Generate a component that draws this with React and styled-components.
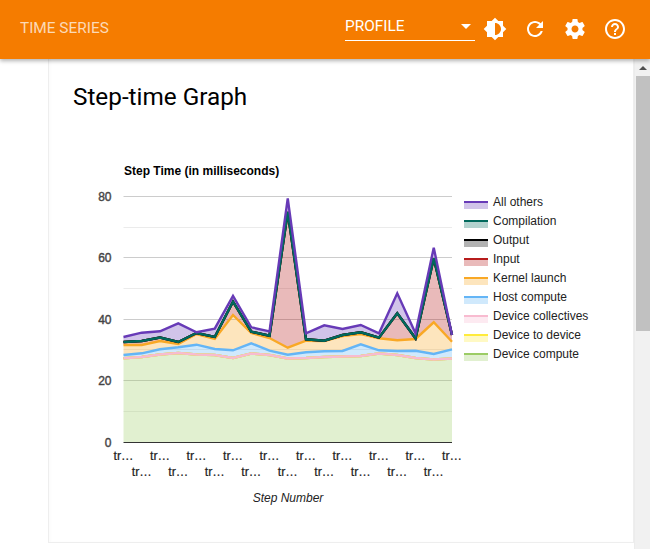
import React from 'react';
import styled, { createGlobalStyle } from 'styled-components';

const GlobalStyle = createGlobalStyle`
  html, body {
    margin: 0;
    height: 100%;
    overflow: hidden;
    background: #fff;
    font-family: Roboto, "Helvetica Neue", sans-serif;
  }
  #root { height: 100%; }
`;

const Page = styled.div`
  display: flex;
  flex-direction: column;
  height: 549px;
`;

const Header = styled.header`
  display: flex;
  align-items: center;
  flex: 0 0 59px;
  box-sizing: border-box;
  height: 59px;
  padding: 0 15px 2px 20px;
  background: #f57c00;
  color: #fff;
  box-shadow: 0 2px 4px rgba(0, 0, 0, 0.3);
  position: relative;
  z-index: 2;
`;

const AppTitle = styled.div`
  flex: 1;
  margin-bottom: 2px;
  font-size: 15.4px;
  color: rgba(255, 255, 255, 0.72);
`;

const RunSelect = styled.div`
  display: flex;
  align-items: center;
  justify-content: space-between;
  box-sizing: border-box;
  width: 130px;
  height: 25px;
  padding: 0 4px 4px 0;
  border-bottom: 1px solid #fff;
  font-size: 15.4px;
`;

const Caret = styled.span`
  width: 0;
  height: 0;
  border-left: 5px solid transparent;
  border-right: 5px solid transparent;
  border-top: 5px solid #fff;
`;

const IconButton = styled.button`
  display: flex;
  align-items: center;
  justify-content: center;
  width: 40px;
  height: 40px;
  padding: 0;
  border: 0;
  background: none;
  color: #fff;
`;

const Body = styled.div`
  display: flex;
  flex: 1;
  min-height: 0;
`;

const Main = styled.main`
  flex: 1;
  min-width: 0;
  padding: 0 0 6px 48px;
`;

const Card = styled.section`
  box-sizing: border-box;
  height: 100%;
  padding: 23px 0 0 24px;
  border: solid #eee;
  border-width: 0 1px 1px 1px;
  box-shadow: inset 2px 0 2px rgba(0, 0, 0, 0.015);
`;

const Heading = styled.h1`
  margin: 0;
  font-size: 24.3px;
  font-weight: 400;
  line-height: 30px;
  color: #000;
`;

const ChartTitle = styled.div`
  margin: 52px 0 0 51px;
  font-family: "Liberation Sans", Arial, sans-serif;
  font-size: 12px;
  font-weight: 700;
  line-height: 14px;
  color: #000;
`;

const ChartRow = styled.div`
  display: flex;
  align-items: flex-start;
`;

const Legend = styled.ul`
  display: flex;
  flex-direction: column;
  gap: 5px;
  margin: 17px 0 0;
  padding: 0;
  list-style: none;
`;

const LegendRow = styled.li`
  display: flex;
  align-items: center;
  gap: 5px;
  height: 14px;
  font-family: "Liberation Sans", Arial, sans-serif;
  font-size: 12px;
  color: #222;
`;

const Swatch = styled.span`
  box-sizing: border-box;
  width: 24px;
  height: 8px;
  margin-top: 6px;
  border-top: 2px solid ${({ $color }) => $color};
  background: ${({ $color }) => `${$color}4d`};
`;

const Scrollbar = styled.div`
  display: flex;
  flex-direction: column;
  flex: 0 0 16px;
  background: #f1f1f1;
  margin-top: 0;
  border-left: 1px solid #ececec;
  box-sizing: border-box;
`;

const ScrollArrow = styled.div`
  display: flex;
  justify-content: center;
  align-items: center;
  height: 17px;

  &::before {
    content: '';
    border-left: 4px solid transparent;
    border-right: 4px solid transparent;
    border-bottom: 4px solid #505050;
  }
`;

const ScrollThumb = styled.div`
  height: 255px;
  background: #c1c1c1;
  margin-left: 1px;
`;

const ICONS = [
  { name: 'theme', d: 'M20 15.31L23.31 12 20 8.69V4h-4.69L12 .69 8.69 4H4v4.69L.69 12 4 15.31V20h4.69L12 23.31 15.31 20H20v-4.69zM12 18V6c3.31 0 6 2.69 6 6s-2.69 6-6 6z' },
  { name: 'refresh', d: 'M17.65 6.35C16.2 4.9 14.21 4 12 4c-4.42 0-7.99 3.58-7.99 8s3.57 8 7.99 8c3.73 0 6.84-2.55 7.73-6h-2.08c-.82 2.33-3.04 4-5.65 4-3.31 0-6-2.69-6-6s2.69-6 6-6c1.66 0 3.14.69 4.22 1.78L13 11h7V4l-2.35 2.35z' },
  { name: 'settings', d: 'M19.43 12.98c.04-.32.07-.64.07-.98s-.03-.66-.07-.98l2.11-1.65c.19-.15.24-.42.12-.64l-2-3.46c-.12-.22-.39-.3-.61-.22l-2.49 1c-.52-.4-1.08-.73-1.69-.98l-.38-2.65C14.46 2.18 14.25 2 14 2h-4c-.25 0-.46.18-.49.42l-.38 2.65c-.61.25-1.17.59-1.69.98l-2.49-1c-.23-.09-.49 0-.61.22l-2 3.46c-.13.22-.07.49.12.64l2.11 1.65c-.04.32-.07.65-.07.98s.03.66.07.98l-2.11 1.65c-.19.15-.24.42-.12.64l2 3.46c.12.22.39.3.61.22l2.49-1c.52.4 1.08.73 1.69.98l.38 2.65c.03.24.24.42.49.42h4c.25 0 .46-.18.49-.42l.38-2.65c.61-.25 1.17-.59 1.69-.98l2.49 1c.23.09.49 0 .61-.22l2-3.46c.12-.22.07-.49-.12-.64l-2.11-1.65zM12 15.5c-1.93 0-3.5-1.57-3.5-3.5s1.57-3.5 3.5-3.5 3.5 1.57 3.5 3.5-1.57 3.5-3.5 3.5z' },
  { name: 'help', d: 'M11 18h2v-2h-2v2zm1-16C6.48 2 2 6.48 2 12s4.48 10 10 10 10-4.48 10-10S17.52 2 12 2zm0 18c-4.41 0-8-3.59-8-8s3.59-8 8-8 8 3.59 8 8-3.59 8-8 8zm0-14c-2.21 0-4 1.79-4 4h2c0-1.1.9-2 2-2s2 .9 2 2c0 2-3 1.75-3 5h2c0-2.25 3-2.5 3-5 0-2.21-1.79-4-4-4z' },
];

// chart coords are page pixels minus this origin
const ORIGIN_X = 73;
const ORIGIN_Y = 178;
const PLOT_LEFT = 123.5;
const PLOT_STEP = 18.25;
const BASE_Y = 442;

const xAt = (i) => PLOT_LEFT + PLOT_STEP * i - ORIGIN_X;

// y pixel of each stacked line, read off the reference, top series first
const COMPILATION = [342, 341, 337.5, 342, 333, 337, 301.7, 331.7, 335.7, 212, 339.3, 340.7, 335, 332.3, 337.7, 313.3, 338.3, 258.3, 335];
const COLLECTIVES = [358.3, 357, 354.5, 353, 354.5, 355, 358, 353.5, 355, 358.5, 358, 357, 356.5, 356, 353.5, 355, 358, 359.5, 358.5];

const SERIES = [
  { name: 'All others', color: '#673ab7', ys: [337, 332.7, 331.3, 323.3, 332.3, 328.7, 296, 327.3, 331.3, 198.3, 333.3, 325.3, 329, 325, 333.3, 293.3, 333.3, 247.7, 335] },
  { name: 'Compilation', color: '#00695c', ys: COMPILATION },
  { name: 'Output', color: '#000000', ys: COMPILATION },
  { name: 'Input', color: '#b71c1c', ys: COMPILATION },
  { name: 'Kernel launch', color: '#f9a825', ys: [345, 345, 341, 344, 334, 339, 315, 333, 338, 347.7, 340.7, 341, 336, 334, 338.3, 340.3, 339, 322.3, 341.7] },
  { name: 'Host compute', color: '#64b5f6', ys: [355, 353.3, 349.3, 347.3, 344.7, 349, 350.3, 343.3, 350.7, 354.7, 352.3, 351.3, 351, 344.3, 350.3, 351, 350.7, 354, 349.3] },
  { name: 'Device collectives', color: '#f8bbd0', ys: COLLECTIVES },
  { name: 'Device to device', color: '#ffeb3b', ys: COLLECTIVES },
  { name: 'Device compute', color: '#9ccc65', ys: COLLECTIVES },
];

const linePoints = (ys) => ys.map((y, i) => `${xAt(i)},${y - ORIGIN_Y}`).join(' ');

const areaPoints = (ys, below) => {
  const bottom = below
    ? [...below].reverse().map((y, i) => `${xAt(below.length - 1 - i)},${y - ORIGIN_Y}`)
    : [`${xAt(ys.length - 1)},${BASE_Y - ORIGIN_Y}`, `${xAt(0)},${BASE_Y - ORIGIN_Y}`];
  return `${linePoints(ys)} ${bottom.join(' ')}`;
};

const GRID = [80, 70, 60, 50, 40, 30, 20, 10];
// snapped to the pixel row so the 1px rules stay crisp
const yOf = (v) => Math.floor(BASE_Y - v * 3.0675 - ORIGIN_Y) + 0.5;

const AxisText = styled.text`
  font-family: "Liberation Sans", Arial, sans-serif;
  font-size: 12.5px;
  fill: #222;
  stroke: #222;
  stroke-width: 0.2px;
`;

const TickText = styled(AxisText)`
  font-size: 12px;
  fill: #444;
  stroke: #444;
  stroke-width: 0.4px;
`;

const AxisTitle = styled(AxisText)`
  font-size: 12px;
  font-style: italic;
  stroke: none;
`;

const StepChart = () => (
  <svg width="391" height="335" viewBox="0 0 391 335" style={{ display: 'block', flex: 'none' }}>
    {GRID.map((v) => (
      <line
        key={v}
        x1={xAt(0)}
        x2={xAt(18)}
        y1={yOf(v)}
        y2={yOf(v)}
        stroke={v % 20 === 0 ? '#cccccc' : '#ebebeb'}
        strokeWidth="1"
      />
    ))}
    {[...SERIES].reverse().map((s, idx, list) => (
      <polygon
        key={s.name}
        points={areaPoints(s.ys, idx > 0 ? list[idx - 1].ys : null)}
        fill={s.color}
        fillOpacity="0.3"
      />
    ))}
    <line x1={xAt(0)} x2={xAt(18)} y1={yOf(0)} y2={yOf(0)} stroke="#333" strokeWidth="1" />
    {[...SERIES].reverse().map((s) => (
      <polyline key={s.name} points={linePoints(s.ys)} fill="none" stroke={s.color} strokeWidth="2.4" />
    ))}
    {[0, 20, 40, 60, 80].map((v) => (
      <TickText key={v} x={PLOT_LEFT - ORIGIN_X - 12} y={yOf(v) + 4} textAnchor="end">
        {v}
      </TickText>
    ))}
    {SERIES[0].ys.map((_, i) => (
      <AxisText key={i} x={xAt(i)} y={i % 2 === 0 ? 282 : 298} textAnchor="middle">
        tr…
      </AxisText>
    ))}
    <AxisTitle x={215} y={324} textAnchor="middle">Step Number</AxisTitle>
  </svg>
);

const App = () => (
  <Page>
    <GlobalStyle />
    <Header>
      <AppTitle>TIME SERIES</AppTitle>
      <RunSelect>
        PROFILE
        <Caret />
      </RunSelect>
      {ICONS.map((icon) => (
        <IconButton key={icon.name} aria-label={icon.name}>
          <svg width="24" height="24" viewBox="0 0 24 24" fill="currentColor">
            <path d={icon.d} />
          </svg>
        </IconButton>
      ))}
    </Header>
    <Body>
      <Main>
        <Card>
          <Heading>Step-time Graph</Heading>
          <ChartTitle>Step Time (in milliseconds)</ChartTitle>
          <ChartRow>
            <StepChart />
            <Legend>
              {SERIES.map((s) => (
                <LegendRow key={s.name}>
                  <Swatch $color={s.color} />
                  {s.name}
                </LegendRow>
              ))}
            </Legend>
          </ChartRow>
        </Card>
      </Main>
      <Scrollbar>
        <ScrollArrow />
        <ScrollThumb />
      </Scrollbar>
    </Body>
  </Page>
);

export default App;
